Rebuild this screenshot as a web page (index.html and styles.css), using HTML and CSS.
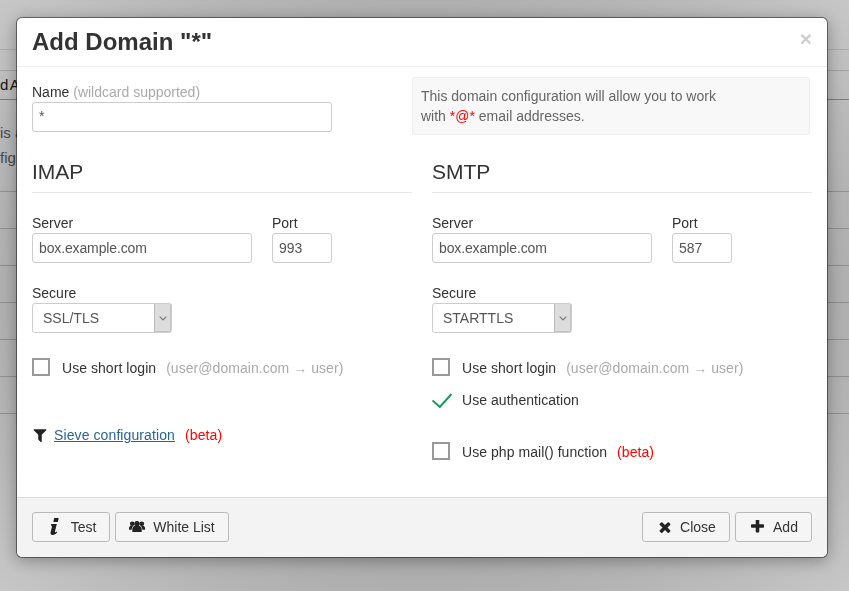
FILE: index.html
```html
<!DOCTYPE html>
<html lang="en">
<head>
<meta charset="utf-8">
<title>Add Domain</title>
<link rel="stylesheet" href="styles.css">
</head>
<body>
<div class="page">
  <div class="bg-tab"><span class="bg-tab-text">d A</span></div>
  <div class="bg-copy">
    <p>is a</p>
    <p>fig</p>
  </div>
  <div class="bg-rows">
    <div class="bg-row"></div><div class="bg-row"></div><div class="bg-row"></div>
    <div class="bg-row"></div><div class="bg-row"></div><div class="bg-row"></div>
  </div>
</div>

<div class="backdrop"></div>

<div class="modal">
  <header class="modal-header">
    <h2 class="modal-title">Add Domain "*"</h2>
    <span class="dismiss">×</span>
  </header>

  <div class="modal-body">
    <div class="top-row">
      <div class="name-field">
        <label class="label">Name <span class="hint">(wildcard supported)</span></label>
        <div class="input input-name">*</div>
      </div>
      <div class="info-box">This domain configuration will allow you to work<br>with <span class="red">*@*</span> email addresses.</div>
    </div>

    <div class="columns">
      <section class="column">
        <h3 class="section-title">IMAP</h3>
        <div class="server-row">
          <div>
            <label class="label">Server</label>
            <div class="input input-server">box.example.com</div>
          </div>
          <div>
            <label class="label">Port</label>
            <div class="input input-port">993</div>
          </div>
        </div>
        <label class="label label-secure">Secure</label>
        <div class="select"><span class="select-value">SSL/TLS</span><span class="select-arrow"><svg width="8" height="5" viewBox="0 0 8 5"><path d="M.7.7 4 4 7.3.7" fill="none" stroke="#777" stroke-width="1.2"/></svg></span></div>
        <div class="check-row first-check"><span class="checkbox"></span><span class="check-label">Use short login</span><span class="hint check-hint">(user@domain.com → user)</span></div>
        <div class="sieve-row">
          <svg class="icon-filter" width="14" height="13" viewBox="130 256 1532 1344"><path fill="#222" d="M1595 295q17 41-14 70l-493 493v742q0 42-39 59-13 5-25 5-27 0-45-19l-256-256q-19-19-19-45v-486l-493-493q-31-29-14-70 17-39 59-39h1280q42 0 59 39z"/></svg>
          <a class="link" href="#">Sieve configuration</a>
          <span class="red beta">(beta)</span>
        </div>
      </section>

      <section class="column">
        <h3 class="section-title">SMTP</h3>
        <div class="server-row">
          <div>
            <label class="label">Server</label>
            <div class="input input-server">box.example.com</div>
          </div>
          <div>
            <label class="label">Port</label>
            <div class="input input-port">587</div>
          </div>
        </div>
        <label class="label label-secure">Secure</label>
        <div class="select"><span class="select-value">STARTTLS</span><span class="select-arrow"><svg width="8" height="5" viewBox="0 0 8 5"><path d="M.7.7 4 4 7.3.7" fill="none" stroke="#777" stroke-width="1.2"/></svg></span></div>
        <div class="check-row first-check"><span class="checkbox"></span><span class="check-label">Use short login</span><span class="hint check-hint">(user@domain.com → user)</span></div>
        <div class="check-row auth-check"><svg class="tick" width="20" height="15" viewBox="0 0 20 15"><path d="M.6 7.400 7.800 14 19.500 1" fill="none" stroke="#1a9a5c" stroke-width="2"/></svg><span class="check-label">Use authentication</span></div>
        <div class="check-row php-check"><span class="checkbox"></span><span class="check-label">Use php mail() function</span><span class="red check-hint">(beta)</span></div>
      </section>
    </div>
  </div>

  <footer class="modal-footer">
    <div class="btn-group">
      <button class="btn btn-test"><svg class="btn-icon" width="9" height="17" viewBox="0 0 9 17"><path fill="#222" d="M4.200 0h4.500L7.800 4H3.300zM1.200 6h5.600L4.900 13.800c-.1.500.5.500 1 .1l.7-.5.600.8C5.900 16 4.500 17 2.700 17 .9 17 .2 16 .6 14.300L2 8.400c.1-.6-.4-.7-1-.6z"/></svg>Test</button>
      <button class="btn btn-white"><svg class="btn-icon" width="16" height="11" viewBox="0 0 16 11"><g fill="#222"><circle cx="8" cy="2.700" r="2.700"/><circle cx="3.200" cy="2.800" r="2.300"/><circle cx="12.800" cy="2.800" r="2.300"/><path d="M3.300 11V8.500C3.300 6 5 4.800 6.300 4.800h3.400c1.300 0 3 1.200 3 3.700V11zM0 8.800V7.200C0 5.700.9 4.800 2 4.800h2.500C3.200 5.800 2.700 7 2.700 8.800zM16 8.800V7.200c0-1.500-.9-2.400-2-2.400h-2.500c1.300 1 1.800 2.200 1.800 4z"/></g></svg>White List</button>
    </div>
    <div class="btn-group">
      <button class="btn btn-close"><svg class="btn-icon" width="13" height="12" viewBox="190 240 1302 1314"><path fill="#222" d="M1490 1322q0 40-28 68l-136 136q-28 28-68 28t-68-28l-294-294-294 294q-28 28-68 28t-68-28l-136-136q-28-28-28-68t28-68l294-294-294-294q-28-28-28-68t28-68l136-136q28-28 68-28t68 28l294 294 294-294q28-28 68-28t68 28l136 136q28 28 28 68t-28 68l-294 294 294 294q28 28 28 68z"/></svg>Close</button>
      <button class="btn btn-add"><svg class="btn-icon" width="13" height="13" viewBox="192 192 1408 1408"><path fill="#222" d="M1600 736v192q0 40-28 68t-68 28h-416v416q0 40-28 68t-68 28h-192q-40 0-68-28t-28-68v-416h-416q-40 0-68-28t-28-68v-192q0-40 28-68t68-28h416v-416q0-40 28-68t68-28h192q40 0 68 28t28 68v416h416q40 0 68 28t28 68z"/></svg>Add</button>
    </div>
  </footer>
</div>
</body>
</html>
```
FILE: styles.css
```css
* { box-sizing: border-box; }
html, body { margin: 0; height: 100%; overflow: hidden; }
body {
  background: #fff;
  font-family: "Liberation Sans", Arial, sans-serif;
  font-size: 14px;
  line-height: 20px;
  color: #333;
}

/* Page behind the dialog */
.page { margin-top: 49px; height: 542px; border-top: 1px solid #e4e4e4; padding-top: 20px; }
.bg-tab {
  height: 30px;
  border-top: 1px solid #ddd;
  border-bottom: 1px solid #aaa;
  color: #222;
  white-space: nowrap;
  overflow: hidden;
}
.bg-tab-text { display: block; font-size: 15px; word-spacing: -2px; line-height: 28px; }
.bg-copy { height: 91px; padding-top: 23px; color: #666; font-size: 15px; white-space: nowrap; }
.bg-copy p { margin: 0 0 5px; line-height: 20px; }
.bg-row { height: 37px; border-top: 1px solid #ccc; }
.bg-rows { border-bottom: 1px solid #ccc; width: 100%; }

.backdrop {
  position: fixed;
  inset: 0;
  background: radial-gradient(ellipse at 50% 50%, rgba(0,0,0,.36) 0%, rgba(0,0,0,.34) 60%, rgba(0,0,0,.22) 100%);
}

/* Dialog */
.modal {
  position: fixed;
  left: 16px;
  top: 17px;
  width: 812px;
  height: 541px;
  display: flex;
  flex-direction: column;
  background: #fff;
  border: 1px solid rgba(0,0,0,.45);
  border-radius: 6px;
  box-shadow: 0 3px 16px rgba(0,0,0,.3);
  background-clip: padding-box;
}
.modal-header {
  height: 49px;
  flex: none;
  padding: 0 15px;
  border-bottom: 1px solid #eee;
  display: flex;
  justify-content: space-between;
}
.modal-title { margin: 0; font-size: 24px; line-height: 47px; font-weight: 700; color: #333; }
.dismiss { font-size: 21px; font-weight: 700; line-height: 42px; color: #000; opacity: .2; }

.modal-body { flex: 1; padding: 10px 15px 0; }
.top-row { display: flex; gap: 80px; }
.name-field { width: 300px; padding-top: 5px; }
.label { display: block; line-height: 20px; color: #333; }
.hint { color: #aaa; }
.red { color: #f00; }

.input {
  height: 30px;
  border: 1px solid #ccc;
  border-radius: 3px;
  padding: 0 6px;
  line-height: 28px;
  color: #555;
  background: #fff;
}
.input-name { width: 300px; line-height: 27px; }
.input-server { width: 220px; letter-spacing: -.13px; }
.input-port { width: 60px; }

.info-box {
  width: 398px;
  height: 58px;
  padding: 8px;
  background: #f8f8f8;
  border: 1px solid #eee;
  border-radius: 3px;
  color: #666;
}

.columns { display: flex; gap: 20px; margin-top: 20px; }
.column { width: 380px; }
.section-title {
  margin: 0 0 20px;
  height: 38px;
  font-size: 21px;
  font-weight: 400;
  line-height: 33px;
  color: #333;
  border-bottom: 1px solid #e5e5e5;
}
.server-row { display: flex; gap: 20px; }
.label-secure { margin-top: 20px; }

.select {
  width: 140px;
  height: 30px;
  display: flex;
  border: 1px solid #ccc;
  border-radius: 3px;
  color: #555;
}
.select-value { flex: 1; padding-left: 10px; line-height: 28px; }
.select-arrow {
  width: 17px;
  display: flex;
  align-items: center;
  justify-content: center;
  background: #ddd;
  border-left: 1px solid #bbb;
  box-shadow: inset -1px -1px 0 #c4c4c4;
}

.check-row { display: flex; align-items: center; height: 20px; letter-spacing: .05px; }
.first-check { margin-top: 25px; }
.auth-check { margin-top: 12px; }
.php-check { margin-top: 32px; }
.checkbox { width: 18px; height: 18px; border: 2px solid #999; flex: none; align-self: flex-start; }
.tick { flex: none; margin-right: -2px; }
.check-label { margin-left: 12px; color: #333; }
.check-hint { margin-left: 10px; }

.sieve-row { display: flex; align-items: center; margin-top: 47px; height: 20px; }
.icon-filter { flex: none; margin-left: 1px; }
.link { margin-left: 7px; color: #2a6496; text-decoration: underline; letter-spacing: .1px; }
.beta { margin-left: 10px; letter-spacing: .1px; }

.modal-footer {
  height: 60px;
  flex: none;
  padding: 14px 15px 0;
  display: flex;
  justify-content: space-between;
  background: #f3f3f3;
  border-top: 1px solid #ddd;
  border-radius: 0 0 6px 6px;
}
.btn-group { display: flex; gap: 5px; }
.btn {
  height: 30px;
  padding: 0;
  display: flex;
  align-items: center;
  justify-content: center;
  font: inherit;
  color: #333;
  background: #f5f5f5;
  border: 1px solid #bbb;
  border-radius: 3px;
}
.btn-test { width: 78px; gap: 12px; padding-left: 4px; }
.btn-white { width: 114px; gap: 8px; }
.btn-close { width: 88px; gap: 9px; padding-left: 2px; }
.btn-add { width: 77px; gap: 9px; padding-left: 2px; }
.btn-icon { flex: none; margin-top: -1px; }
```
